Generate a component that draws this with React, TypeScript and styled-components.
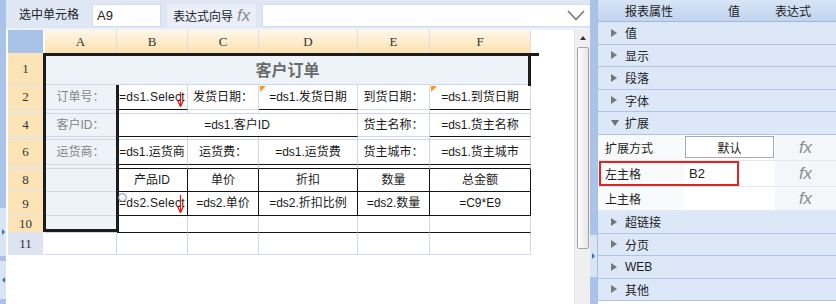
import styled, { createGlobalStyle } from "styled-components";

const GRID = "#cfd7e6";
const INK = "#141414";
const FILL = "#eef3fa";

const GlobalStyle = createGlobalStyle`
  html, body { margin: 0; padding: 0; }
  body {
    width: 836px;
    height: 304px;
    overflow: hidden;
    background: #fff;
    color: #222;
    font-family: "Liberation Sans", "Noto Sans CJK SC", sans-serif;
    font-size: 12px;
  }
`;

const Shell = styled.div`
  display: flex;
  width: 836px;
  height: 304px;
  overflow: hidden;
`;

const Strip = styled.div<{ $w: number }>`
  flex: none;
  width: ${p => p.$w}px;
  display: flex;
  flex-direction: column;
  background: #a9c4e8;
`;

const StripPart = styled.div<{ $h?: number; $light?: boolean }>`
  flex: ${p => (p.$h ? `0 0 ${p.$h}px` : "1")};
  background: ${p => (p.$light ? "#d9e5f5" : "#a9c4e8")};
  display: flex;
  align-items: center;
  justify-content: center;
`;

const Pointer = styled.span<{ $dir: "left" | "right" }>`
  width: 0;
  height: 0;
  border-top: 3px solid transparent;
  border-bottom: 3px solid transparent;
  ${p => (p.$dir === "right" ? "border-left: 3px solid #3d72bb;" : "border-right: 3px solid #3d72bb;")}
`;

const Workspace = styled.div`
  flex: none;
  width: 584px;
  display: flex;
  flex-direction: column;
`;

const TopBar = styled.div`
  height: 30px;
  box-sizing: border-box;
  display: flex;
  align-items: flex-start;
  padding: 4px 0 0 13px;
  background: #dfe6f4;
  border-bottom: 2px solid #edf1f9;
`;

const BarLabel = styled.span`
  line-height: 23px;
  color: #222;
  width: 73px;
`;

const CellBox = styled.div`
  width: 69px;
  height: 23px;
  box-sizing: border-box;
  background: #fff;
  border: 1px solid #d5dcea;
  padding-left: 4px;
  line-height: 21px;
  font-size: 13px;
`;

const WizardLabel = styled.div`
  margin-left: 6px;
  width: 89px;
  height: 23px;
  box-sizing: border-box;
  padding-left: 6px;
  background: #e9eef8;
  display: flex;
  align-items: center;
  gap: 4px;
`;

const Fx = styled.span`
  font-family: "Liberation Sans", sans-serif;
  font-style: italic;
  font-size: 17px;
  color: #8c8c8c;
  line-height: 1;
`;

const ExprBox = styled.div`
  margin-left: 6px;
  flex: 1;
  height: 23px;
  box-sizing: border-box;
  background: #fff;
  border: 1px solid #d5dcea;
  border-right: none;
  display: flex;
  align-items: center;
  justify-content: flex-end;
  padding-right: 5px;
`;

const SheetRow = styled.div`
  flex: 1;
  display: flex;
  min-height: 0;
`;

const SheetArea = styled.div`
  flex: 1;
  padding-left: 2px;
  background: #fff;
  overflow: hidden;
`;

const SheetFrame = styled.div`
  position: relative;
  width: 523px;
`;

const Sheet = styled.table`
  border-collapse: separate;
  border-spacing: 0;
  table-layout: fixed;
  width: 523px;
`;

const Row = styled.tr<{ $h: number }>`
  height: ${p => p.$h}px;
`;

const Corner = styled.th`
  padding: 0;
  background: #a8c3e7;
  border-right: 2px solid #fff;
`;

const ColHead = styled.th`
  padding: 0;
  background: linear-gradient(#fef7e8, #fce2b0);
  border-right: 1px solid #d8dde8;
  font-family: "Liberation Serif", serif;
  font-weight: normal;
  font-size: 13px;
  color: #333;
`;

const RowHead = styled.th<{ $plain?: boolean }>`
  padding: 0;
  background: ${p => (p.$plain ? "#dde3f1" : "#fce4b6")};
  border-right: 2px solid #fff;
  border-bottom: 1px solid #dfe3ea;
  font-family: "Liberation Serif", serif;
  font-weight: normal;
  font-size: 13px;
  color: #333;
  overflow: hidden;
`;

const Cell = styled.td<{
  $fill?: boolean;
  $muted?: boolean;
  $left?: boolean;
  $under?: boolean;
  $side?: boolean;
}>`
  position: relative;
  padding: 0 0 0 ${p => (p.$left ? 2 : 0)}px;
  background: ${p => (p.$fill ? FILL : "#fff")};
  border-right: 1px solid ${p => (p.$side ? INK : GRID)};
  border-bottom: 1px solid ${p => (p.$under ? INK : GRID)};
  text-align: ${p => (p.$left ? "left" : "center")};
  letter-spacing: ${p => (p.$left ? "0.25px" : "0")};
  color: ${p => (p.$muted ? "#858585" : "#1a1a1a")};
  white-space: nowrap;
  overflow: hidden;
  line-height: 15px;
  font-size: 12px;
`;

const TitleCell = styled(Cell)`
  font-family: "Noto Sans CJK SC", sans-serif;
  font-weight: bold;
  font-size: 16px;
  color: #6b6b6b;
  line-height: 20px;
`;

const CornerFlag = styled.span`
  position: absolute;
  left: 1px;
  top: 1px;
  width: 0;
  height: 0;
  border-top: 6px solid #f39a1e;
  border-right: 6px solid transparent;
`;

const ArrowMark = styled.span<{ $top: number }>`
  position: absolute;
  right: 3px;
  top: ${p => p.$top}px;
  display: flex;
`;

const Edge = styled.div<{ $x: number; $y: number; $w: number; $h: number }>`
  position: absolute;
  left: ${p => p.$x}px;
  top: ${p => p.$y}px;
  width: ${p => p.$w}px;
  height: ${p => p.$h}px;
  background: #1c1c1c;
`;

const Handle = styled.div`
  position: absolute;
  left: 110px;
  top: 163px;
  width: 9px;
  height: 9px;
  box-sizing: border-box;
  border-radius: 50%;
  border: 1px solid #8c97ab;
  background: radial-gradient(circle at 35% 35%, #ffffff, #d5dbe6);
`;

const Scroll = styled.div`
  flex: none;
  width: 16px;
  background: #efefef;
  border-left: 1px solid #e3e3e3;
  box-sizing: border-box;
  display: flex;
  flex-direction: column;
  align-items: center;
  padding-top: 6px;
`;

const UpArrow = styled.span`
  width: 0;
  height: 0;
  border-left: 3px solid transparent;
  border-right: 3px solid transparent;
  border-bottom: 4px solid #333;
`;

const Thumb = styled.div`
  margin-top: 7px;
  width: 12px;
  height: 202px;
  box-sizing: border-box;
  border: 1px solid #a3a3a3;
  border-radius: 2px;
  background: linear-gradient(to right, #fdfdfd, #e6e6e6);
`;

const Panel = styled.div`
  flex: 1;
  display: flex;
  flex-direction: column;
  border-left: 1px solid #a7bfdf;
  background: #fff;
`;

const PanelHead = styled.div`
  height: 22px;
  box-sizing: border-box;
  display: grid;
  grid-template-columns: 103px 47px 1fr;
  align-items: center;
  padding-left: 27px;
  background: linear-gradient(#d7e4f5, #c1d4ee);
  border-bottom: 1px solid #9fb8da;
  color: #222;
  white-space: nowrap;
`;

const Group = styled.div`
  height: 22.5px;
  box-sizing: border-box;
  display: flex;
  align-items: center;
  padding-left: 13px;
  background: #dce8f8;
  border-bottom: 1px solid #afc5e3;
  color: #1e1e1e;
`;

const Caret = styled.span<{ $open?: boolean }>`
  width: 0;
  height: 0;
  margin-right: ${p => (p.$open ? 6 : 8)}px;
  ${p =>
    p.$open
      ? "border-left: 4px solid transparent; border-right: 4px solid transparent; border-top: 6px solid #6f6f6f;"
      : "border-top: 4px solid transparent; border-bottom: 4px solid transparent; border-left: 6px solid #777;"}
`;

const PropRow = styled.div<{ $h: number }>`
  position: relative;
  height: ${p => p.$h}px;
  box-sizing: border-box;
  display: grid;
  grid-template-columns: 86px 91px 1fr;
  border-bottom: 1px solid #e4e8ef;
`;

const PropLabel = styled.div`
  display: flex;
  align-items: center;
  padding-left: 7px;
  background: #f9fafc;
  color: #1e1e1e;
`;

const PropValue = styled.div`
  display: flex;
  align-items: center;
  padding: 0 1px 0 5px;
  background: #fff;
  font-size: 13px;
`;

const PropFx = styled.div`
  display: flex;
  align-items: center;
  justify-content: center;
  background: #f4f6f9;
`;

const ChoiceButton = styled.div`
  flex: 1;
  margin-left: -4px;
  height: 22px;
  box-sizing: border-box;
  border: 1px solid #a9a9a9;
  background: #fff;
  display: flex;
  align-items: center;
  justify-content: center;
  font-size: 12px;
`;

const Highlight = styled.div`
  position: absolute;
  left: 1px;
  top: 0;
  width: 140px;
  height: 25px;
  box-sizing: border-box;
  border: 2px solid #e2231f;
  pointer-events: none;
`;

const DropArrow = ({ h }: { h: number }) => (
  <svg width="7" height={h} viewBox={`0 0 7 ${h}`}>
    <path d={`M3.5 0V${h - 1}`} stroke="#e3161a" strokeWidth="1.2" />
    <path d={`M0.8 ${h - 6}L3.5 ${h - 0.5}L6.2 ${h - 6}`} fill="none" stroke="#e3161a" strokeWidth="1.3" />
  </svg>
);

const Chevron = () => (
  <svg width="18" height="11" viewBox="0 0 18 11">
    <polyline points="1,1 9,9.5 17,1" fill="none" stroke="#7a7a7a" strokeWidth="1.6" />
  </svg>
);

const groupsTop = ["值", "显示", "段落", "字体"];
const groupsBottom = ["超链接", "分页", "WEB", "其他"];

export default function App() {
  return (
    <>
      <GlobalStyle />
      <Shell>
        <Strip $w={6}>
          <StripPart $h={208} />
          <StripPart $h={48} $light>
            <Pointer $dir="right" />
          </StripPart>
          <StripPart $h={5} />
          <StripPart $h={38} $light>
            <Pointer $dir="left" />
          </StripPart>
          <StripPart />
        </Strip>

        <Workspace>
          <TopBar>
            <BarLabel>选中单元格</BarLabel>
            <CellBox>A9</CellBox>
            <WizardLabel>
              表达式向导 <Fx>fx</Fx>
            </WizardLabel>
            <ExprBox>
              <Chevron />
            </ExprBox>
          </TopBar>

          <SheetRow>
            <SheetArea>
              <SheetFrame>
                <Sheet>
                  <colgroup>
                    <col style={{ width: 37 }} />
                    <col style={{ width: 72 }} />
                    <col style={{ width: 71 }} />
                    <col style={{ width: 71 }} />
                    <col style={{ width: 99 }} />
                    <col style={{ width: 72 }} />
                    <col style={{ width: 101 }} />
                  </colgroup>
                  <thead>
                    <Row $h={23}>
                      <Corner />
                      <ColHead>A</ColHead>
                      <ColHead>B</ColHead>
                      <ColHead>C</ColHead>
                      <ColHead>D</ColHead>
                      <ColHead>E</ColHead>
                      <ColHead>F</ColHead>
                    </Row>
                  </thead>
                  <tbody>
                    <Row $h={32}>
                      <RowHead>1</RowHead>
                      <TitleCell colSpan={6} $fill>客户订单</TitleCell>
                    </Row>
                    <Row $h={25}>
                      <RowHead>2</RowHead>
                      <Cell $fill $muted>订单号：</Cell>
                      <Cell $left $under>
                        =ds1.Select
                        <ArrowMark $top={7}>
                          <DropArrow h={15} />
                        </ArrowMark>
                      </Cell>
                      <Cell>发货日期：</Cell>
                      <Cell $under>
                        <CornerFlag />
                        =ds1.发货日期
                      </Cell>
                      <Cell>到货日期：</Cell>
                      <Cell $under>
                        <CornerFlag />
                        =ds1.到货日期
                      </Cell>
                    </Row>
                    <Row $h={4}>
                      <RowHead />
                      <Cell $fill />
                      <Cell />
                      <Cell />
                      <Cell />
                      <Cell />
                      <Cell />
                    </Row>
                    <Row $h={23}>
                      <RowHead>4</RowHead>
                      <Cell $fill $muted>客户ID：</Cell>
                      <Cell colSpan={3} $under>=ds1.客户ID</Cell>
                      <Cell>货主名称：</Cell>
                      <Cell $under>=ds1.货主名称</Cell>
                    </Row>
                    <Row $h={3}>
                      <RowHead />
                      <Cell $fill />
                      <Cell />
                      <Cell />
                      <Cell />
                      <Cell />
                      <Cell />
                    </Row>
                    <Row $h={25}>
                      <RowHead>6</RowHead>
                      <Cell $fill $muted>运货商：</Cell>
                      <Cell $under>=ds1.运货商</Cell>
                      <Cell $under>运货费：</Cell>
                      <Cell $under>=ds1.运货费</Cell>
                      <Cell $under>货主城市：</Cell>
                      <Cell $under>=ds1.货主城市</Cell>
                    </Row>
                    <Row $h={4}>
                      <RowHead />
                      <Cell $fill />
                      <Cell $under />
                      <Cell $under />
                      <Cell $under />
                      <Cell $under />
                      <Cell $under />
                    </Row>
                    <Row $h={23}>
                      <RowHead>8</RowHead>
                      <Cell $fill />
                      <Cell $under $side>产品ID</Cell>
                      <Cell $under $side>单价</Cell>
                      <Cell $under $side>折扣</Cell>
                      <Cell $under $side>数量</Cell>
                      <Cell $under $side>总金额</Cell>
                    </Row>
                    <Row $h={24}>
                      <RowHead>9</RowHead>
                      <Cell $fill />
                      <Cell $left $under $side>
                        =ds2.Select
                        <ArrowMark $top={3}>
                          <DropArrow h={18} />
                        </ArrowMark>
                      </Cell>
                      <Cell $under $side>=ds2.单价</Cell>
                      <Cell $under $side>=ds2.折扣比例</Cell>
                      <Cell $under $side>=ds2.数量</Cell>
                      <Cell $under $side>=C9*E9</Cell>
                    </Row>
                    <Row $h={15}>
                      <RowHead>10</RowHead>
                      <Cell $fill />
                      <Cell $under />
                      <Cell $under />
                      <Cell $under />
                      <Cell $under />
                      <Cell $under />
                    </Row>
                    <Row $h={22}>
                      <RowHead $plain>11</RowHead>
                      <Cell />
                      <Cell />
                      <Cell />
                      <Cell />
                      <Cell />
                      <Cell />
                    </Row>
                  </tbody>
                </Sheet>
                <Edge $x={35} $y={23} $w={496} $h={3} />
                <Edge $x={520} $y={23} $w={3} $h={33} />
                <Edge $x={35} $y={23} $w={3} $h={179} />
                <Edge $x={108} $y={55} $w={3} $h={147} />
                <Edge $x={35} $y={199} $w={76} $h={3} />
                <Handle />
              </SheetFrame>
            </SheetArea>
            <Scroll>
              <UpArrow />
              <Thumb />
            </Scroll>
          </SheetRow>
        </Workspace>

        <Strip $w={7}>
          <StripPart $h={235} />
          <StripPart $h={42} $light>
            <Pointer $dir="right" />
          </StripPart>
          <StripPart />
        </Strip>

        <Panel>
          <PanelHead>
            <span>报表属性</span>
            <span>值</span>
            <span>表达式</span>
          </PanelHead>
          {groupsTop.map(name => (
            <Group key={name}>
              <Caret />
              {name}
            </Group>
          ))}
          <Group>
            <Caret $open />
            扩展
          </Group>
          <PropRow $h={26}>
            <PropLabel>扩展方式</PropLabel>
            <PropValue>
              <ChoiceButton>默认</ChoiceButton>
            </PropValue>
            <PropFx>
              <Fx>fx</Fx>
            </PropFx>
          </PropRow>
          <PropRow $h={26}>
            <PropLabel>左主格</PropLabel>
            <PropValue>B2</PropValue>
            <PropFx>
              <Fx>fx</Fx>
            </PropFx>
            <Highlight />
          </PropRow>
          <PropRow $h={24.5}>
            <PropLabel>上主格</PropLabel>
            <PropValue />
            <PropFx>
              <Fx>fx</Fx>
            </PropFx>
          </PropRow>
          {groupsBottom.map(name => (
            <Group key={name}>
              <Caret />
              {name}
            </Group>
          ))}
        </Panel>
      </Shell>
    </>
  );
}
